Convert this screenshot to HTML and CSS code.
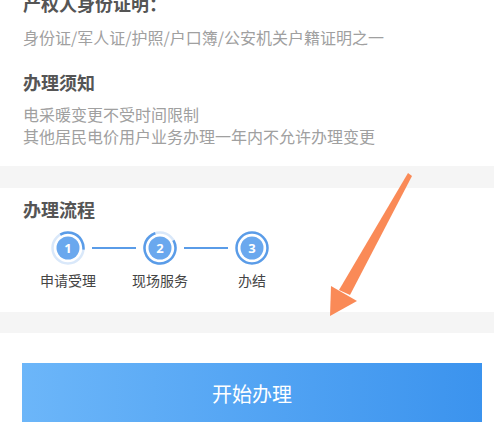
FILE: index.html
```html
<!DOCTYPE html>
<html lang="zh-CN">
<head>
    <meta charset="UTF-8">
    <meta name="viewport" content="width=device-width, initial-scale=1.0">
    <title>办理须知</title>
    <link rel="stylesheet" href="styles.css">
</head>
<body>
    <div class="page">
        <div class="info">
            <h3 class="title first">产权人身份证明：</h3>
            <p class="desc">身份证/军人证/护照/户口簿/公安机关户籍证明之一</p>
            <h3 class="title notice">办理须知</h3>
            <p class="desc notes">电采暖变更不受时间限制<br>其他居民电价用户业务办理一年内不允许办理变更</p>
        </div>

        <div class="gap"></div>

        <div class="flow">
            <h3 class="title">办理流程</h3>
            <div class="circles">
                <svg class="step-icon" width="34" height="34" viewBox="0 0 34 34">
                    <circle cx="17" cy="17" r="15.5" fill="none" stroke="#d9e8fa" stroke-width="2.5"/>
                    <circle cx="17" cy="17" r="15.5" fill="none" stroke="#5a9ce8" stroke-width="2.5" stroke-dasharray="34 100" transform="rotate(-120 17 17)"/>
                    <circle cx="17" cy="17" r="11.5" fill="#6aa8ee"/>
                    <text x="17" y="21.5" text-anchor="middle" class="num">1</text>
                </svg>
                <span class="line"></span>
                <svg class="step-icon" width="34" height="34" viewBox="0 0 34 34">
                    <circle cx="17" cy="17" r="15.5" fill="none" stroke="#d9e8fa" stroke-width="2.5"/>
                    <circle cx="17" cy="17" r="15.5" fill="none" stroke="#5a9ce8" stroke-width="2.5" stroke-dasharray="76 100" transform="rotate(-30 17 17)"/>
                    <circle cx="17" cy="17" r="11.5" fill="#6aa8ee"/>
                    <text x="17" y="21.5" text-anchor="middle" class="num">2</text>
                </svg>
                <span class="line"></span>
                <svg class="step-icon" width="34" height="34" viewBox="0 0 34 34">
                    <circle cx="17" cy="17" r="15.5" fill="none" stroke="#5a9ce8" stroke-width="2.5"/>
                    <circle cx="17" cy="17" r="11.5" fill="#6aa8ee"/>
                    <text x="17" y="21.5" text-anchor="middle" class="num">3</text>
                </svg>
            </div>
            <div class="labels">
                <span>申请受理</span>
                <span>现场服务</span>
                <span>办结</span>
            </div>
        </div>

        <div class="gap gap-bottom"></div>

        <button class="start-button">开始办理</button>

        <!-- annotation arrow drawn over the page -->
        <svg class="arrow" width="494" height="422" viewBox="0 0 494 422">
            <polygon points="408,173 412,176 350,295 339,290" fill="#fa8a57"/>
            <polygon points="331,286 357,301 330,316" fill="#fa8a57"/>
        </svg>
    </div>
</body>
</html>
```

FILE: styles.css
```css
body {
    margin: 0;
    background: #ffffff;
    font-family: "Noto Sans CJK SC", "Noto Sans", sans-serif;
    overflow: hidden;
}
.page {
    position: relative;
    width: 494px;
    height: 422px;
    overflow: hidden;
}
.info {
    padding: 0 23px 19px;
}
.title {
    margin: 0;
    font-size: 18px;
    line-height: 24px;
    font-weight: bold;
    color: #555555;
}
.title.first {
    margin-top: -9px;
}
.title.notice {
    margin-top: 22px;
}
.desc {
    margin: 11px 0 0;
    font-size: 16px;
    line-height: 22px;
    color: #a0a0a0;
}
.desc.notes {
    margin-top: 9px;
}
.gap {
    height: 22px;
    background-color: #f5f5f5;
}
.gap-bottom {
    height: 21px;
}
.flow {
    padding: 9px 23px 22px;
}
.circles {
    display: flex;
    align-items: center;
    margin-top: 10px;
    padding-left: 28px;
}
.step-icon {
    display: block;
    flex: none;
}
.num {
    fill: #ffffff;
    font-size: 13px;
    font-weight: bold;
    font-family: "Noto Sans", sans-serif;
}
.line {
    width: 44px;
    height: 1.5px;
    margin: 0 7px;
    background-color: #5a9ce8;
}
.labels {
    display: flex;
    gap: 22px;
    margin-top: 5px;
    padding-left: 10px;
}
.labels span {
    width: 70px;
    text-align: center;
    font-size: 14px;
    line-height: 20px;
    color: #444444;
}
.start-button {
    display: block;
    width: 460px;
    height: 60px;
    margin: 30px 0 0 22px;
    border: none;
    background: linear-gradient(90deg, #6cb6f9, #3b93ee);
    color: white;
    font-family: "Noto Sans CJK SC", sans-serif;
    font-size: 20px;
    cursor: pointer;
}
.arrow {
    position: absolute;
    left: 0;
    top: 0;
    pointer-events: none;
}
```
